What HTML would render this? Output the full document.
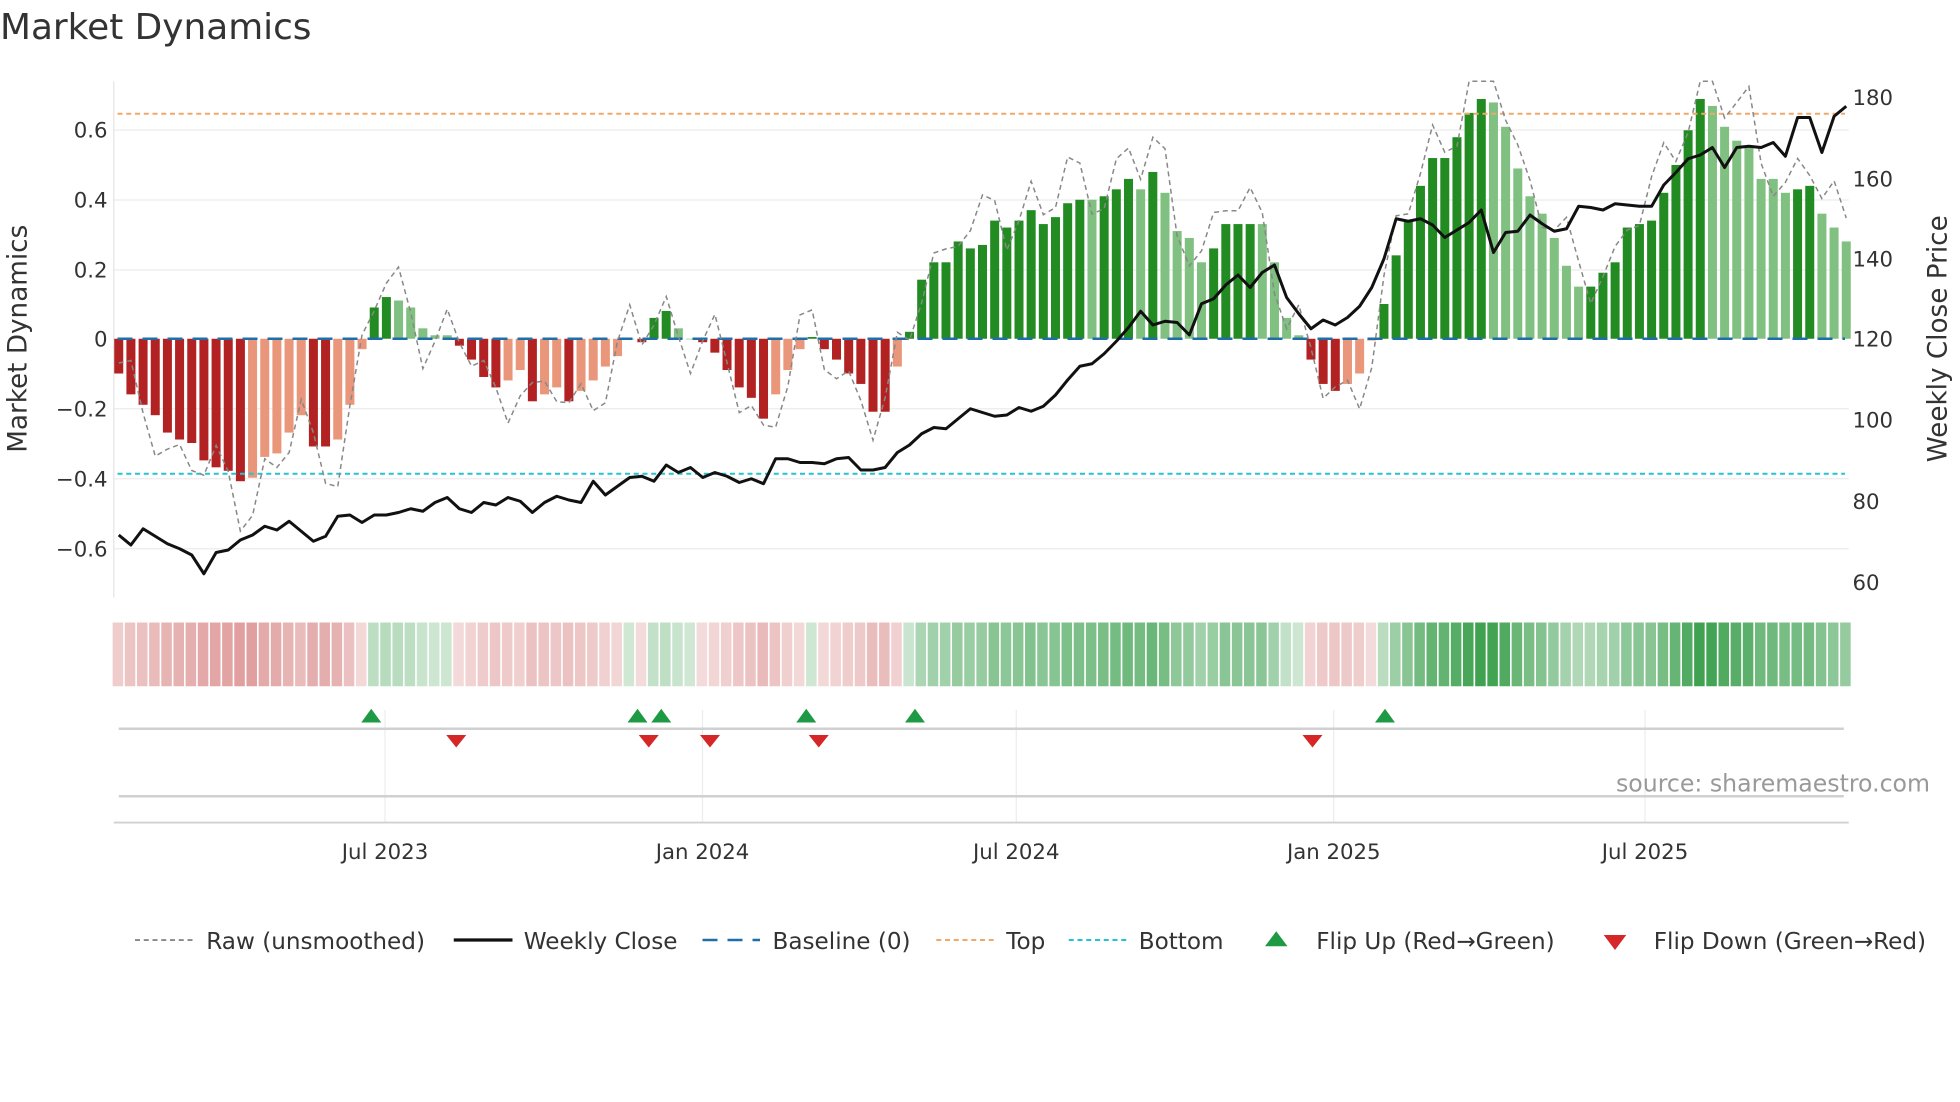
<!DOCTYPE html>
<html><head><meta charset="utf-8"><style>
html,body{margin:0;padding:0;background:#fff;width:1960px;height:1102px;overflow:hidden}
#w{transform:scale(1.25);transform-origin:0 0;width:1568px;height:882px}
svg text{font-family:"DejaVu Sans","Liberation Sans",sans-serif;fill:#333}
</style></head><body><div id="w">
<svg id="s" width="1568" height="882" xmlns="http://www.w3.org/2000/svg">
<text x="0" y="31" font-size="28.7">Market Dynamics</text>
<g stroke="#ececec" stroke-width="1">
<line x1="91" x2="1479" y1="104" y2="104"/><line x1="91" x2="1479" y1="160" y2="160"/><line x1="91" x2="1479" y1="216" y2="216"/><line x1="91" x2="1479" y1="327" y2="327"/><line x1="91" x2="1479" y1="383" y2="383"/><line x1="91" x2="1479" y1="439" y2="439"/>
<line x1="308" x2="308" y1="568" y2="658"/><line x1="562" x2="562" y1="568" y2="658"/><line x1="813" x2="813" y1="568" y2="658"/><line x1="1067" x2="1067" y1="568" y2="658"/><line x1="1316" x2="1316" y1="568" y2="658"/>
</g>
<line x1="91" x2="91" y1="65" y2="478" stroke="#e4e4e4"/>
<line x1="95" x2="1475" y1="583" y2="583" stroke="#d0d0d0" stroke-width="2"/>
<line x1="95" x2="1475" y1="637" y2="637" stroke="#d0d0d0" stroke-width="2"/>
<line x1="91" x2="1479" y1="658" y2="658" stroke="#d0d0d0" stroke-width="1.5"/>
<g id="bars"></g><g id="strip"></g>
<line x1="94" x2="1476" y1="91" y2="91" stroke="#f0a868" stroke-width="1.6" stroke-dasharray="4,3"/>
<line x1="94" x2="1476" y1="379" y2="379" stroke="#22c3d6" stroke-width="1.6" stroke-dasharray="4,3"/>
<line x1="94" x2="1476" y1="271" y2="271" stroke="#1f6ea8" stroke-width="2" stroke-dasharray="12,8"/>
<path id="raw" fill="none" stroke="#888" stroke-width="1.2" stroke-dasharray="4,3"/>
<path id="price" fill="none" stroke="#111" stroke-width="2.4" stroke-linejoin="round"/>
<g font-size="17" text-anchor="end">
<text x="86" y="110">0.6</text><text x="86" y="166">0.4</text><text x="86" y="222">0.2</text><text x="86" y="277">0</text><text x="86" y="333">−0.2</text><text x="86" y="389">−0.4</text><text x="86" y="445">−0.6</text></g>
<g font-size="17"><text x="1482" y="84">180</text><text x="1482" y="149">160</text><text x="1482" y="213">140</text><text x="1482" y="277">120</text><text x="1482" y="342">100</text><text x="1482" y="407">80</text><text x="1482" y="472">60</text></g>
<text transform="translate(21,271) rotate(-90)" font-size="21" text-anchor="middle">Market Dynamics</text>
<text transform="translate(1557,271) rotate(-90)" font-size="21" text-anchor="middle">Weekly Close Price</text>
<g font-size="17" text-anchor="middle"><text x="308" y="687">Jul 2023</text><text x="562" y="687">Jan 2024</text><text x="813" y="687">Jul 2024</text><text x="1067" y="687">Jan 2025</text><text x="1316" y="687">Jul 2025</text></g>
<text x="1544" y="633" font-size="18.9" text-anchor="end" style="fill:#999">source: sharemaestro.com</text>
<g fill="#1e9a45"><path d="M289,578 L297,567 L305,578Z"/><path d="M502,578 L510,567 L518,578Z"/><path d="M521,578 L529,567 L537,578Z"/><path d="M637,578 L645,567 L653,578Z"/><path d="M724,578 L732,567 L740,578Z"/><path d="M1100,578 L1108,567 L1116,578Z"/></g>
<g fill="#d62728"><path d="M357,588 L373,588 L365,598Z"/><path d="M511,588 L527,588 L519,598Z"/><path d="M560,588 L576,588 L568,598Z"/><path d="M647,588 L663,588 L655,598Z"/><path d="M1042,588 L1058,588 L1050,598Z"/></g>
<g font-size="18.5">
<line x1="108" x2="154" y1="752" y2="752" stroke="#888" stroke-width="1.5" stroke-dasharray="4,3"/><text x="165" y="759">Raw (unsmoothed)</text>
<line x1="363" x2="410" y1="752" y2="752" stroke="#111" stroke-width="2.6"/><text x="419" y="759">Weekly Close</text>
<line x1="562" x2="608" y1="752" y2="752" stroke="#1f6ea8" stroke-width="2" stroke-dasharray="12,8"/><text x="618" y="759">Baseline (0)</text>
<line x1="749" x2="795" y1="752" y2="752" stroke="#f0a868" stroke-width="1.6" stroke-dasharray="4,3"/><text x="805" y="759">Top</text>
<line x1="855" x2="901" y1="752" y2="752" stroke="#22c3d6" stroke-width="1.6" stroke-dasharray="4,3"/><text x="911" y="759">Bottom</text>
<path d="M1012,757 L1021,745 L1030,757Z" fill="#1e9a45"/><text x="1053" y="759">Flip Up (Red→Green)</text>
<path d="M1283,748 L1301,748 L1292,760Z" fill="#d62728"/><text x="1323" y="759">Flip Down (Green→Red)</text>
</g>
</svg></div>
<script>
var V="-.1R -.16R -.19R -.22R -.27R -.29R -.3R -.35R -.37R -.38R -.41R -.4r -.34r -.33r -.27r -.22r -.31R -.31R -.29r -.19r -.03r .09G .12G .11g .09g .03g .01g .01g -.02R -.06R -.11R -.14R -.12r -.09r -.18R -.16r -.14r -.18R -.15r -.12r -.08r -.05r 0g -.01R .06G .08G .03g 0g -.01R -.04R -.09R -.14R -.17R -.23R -.16r -.09r -.03r .005G -.03R -.06R -.1R -.13R -.21R -.21R -.08r .02G .17G .22G .22G .28G .26G .27G .34G .32G .34G .37G .33G .35G .39G .4G .4g .41G .43G .46G .43g .48G .42g .31g .29g .22g .26G .33G .33G .33G .33g .22g .06g .01g -.06R -.13R -.15R -.13r -.1r -.005r .1G .24G .34G .44G .52G .52G .58G .65G .69G .68g .61g .49g .41g .36g .29g .21g .15g .15G .19G .22G .32G .33G .34G .42G .5G .6G .69G .67g .61g .57g .55g .46g .46g .42g .43G .44G .36g .32g .28g".split(" ");
var P=[428,436,423,429,435,439,444,459,442,440,432,428,421,424,417,425,433,429,413,412,418,412,412,410,407,409,402,398,407,410,402,404,398,401,410,402,397,400,402,385,396,389,382,381,385,372,378,374,382,378,381,386,383,387,367,367,370,370,371,367,366,376,376,374,362,356,347,342,343,335,327,330,333,332,326,329,325,316,304,293,291,283,273,262,249,260,257,258,268,243,239,228,220,230,218,212,238,251,263,256,260,254,245,230,207,175,177,175,180,190,184,178,168,202,186,185,172,179,185,183,165,166,168,163,164,165,165,148,138,127,124,118,134,118,117,118,114,125,94,94,122,93,85];
var n=V.length,step=(1477-95)/(n-1),b="",st="",raw="M",pr="M";
var C={R:"#b22222",r:"#e9967a",G:"#228b22",g:"#80c080"};
function mix(c,a){return "rgb("+c.map(function(x){return Math.round(255+(x-255)*a)}).join(",")+")"}
for(var i=0;i<n;i++){var v=parseFloat(V[i]),c=V[i].slice(-1),x=95+i*step,y0=271,y1=271-v*278;
b+='<rect x="'+(x-3.6)+'" y="'+Math.min(y0,y1)+'" width="7.2" height="'+Math.max(Math.abs(y1-y0),0.5)+'" fill="'+C[c]+'"/>';
var a=0.25+0.75*Math.min(Math.abs(v)/0.7,1);var col=v<0||c=="R"||c=="r"?mix([200,80,80],a*0.8):mix([40,150,60],a*0.9);
st+='<rect x="'+(x-4.9)+'" y="498" width="'+(step-1.3)+'" height="51" fill="'+col+'"/>';
var nz=Math.sin(i*1.7)*0.07+Math.sin(i*0.9+1)*0.05;var rv=v*1.12+nz;
raw+=(i?"L":"")+x.toFixed(1)+","+Math.max(65,271-rv*278).toFixed(1);
pr+=(i?"L":"")+x.toFixed(1)+","+P[Math.min(i,P.length-1)];}
document.getElementById("bars").innerHTML=b;document.getElementById("strip").innerHTML=st;
document.getElementById("raw").setAttribute("d",raw);document.getElementById("price").setAttribute("d",pr);
</script>
</body></html>
